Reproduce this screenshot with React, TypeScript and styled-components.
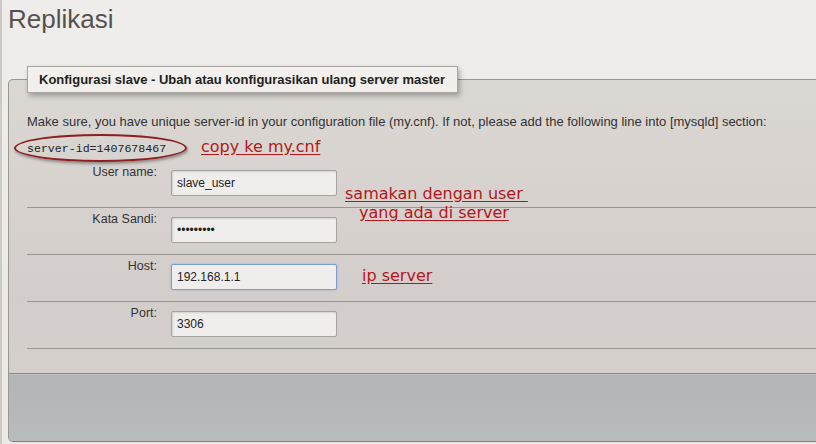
import React from "react";
import styled, { createGlobalStyle } from "styled-components";

const Global = createGlobalStyle`
  html, body {
    margin: 0;
    padding: 0;
    overflow: hidden;
    background: #ece9e6;
  }
  body {
    font-family: "Liberation Sans", Arial, sans-serif;
    color: #333;
  }
`;

const Page = styled.div`
  height: 444px;
  box-sizing: border-box;
  border-left: 2px solid #cdc9c5;
  padding: 4px 0 0 6px;
  background: linear-gradient(#efedeb, #ebe8e5);
`;

const Title = styled.h1`
  margin: 0 0 32px 0;
  font-family: "Liberation Sans", Arial, sans-serif;
  font-weight: normal;
  font-size: 26px;
  line-height: 30px;
  color: #57514d;
`;

const Fieldset = styled.fieldset`
  margin: 0 -40px 0 0;
  padding: 0 0 0 18px;
  border: 1px solid #9a9691;
  border-bottom-color: #7f7c79;
  border-radius: 5px;
  background: linear-gradient(#dbd7d3, #d3cecb 60%, #d5d1cd);
  min-width: 0;
`;

const Legend = styled.legend`
  padding: 5px 12px 5px 11px;
  margin: 0;
  background: #f2efec;
  border: 1px solid #a9a5a1;
  box-shadow: 2px 3px 5px rgba(0, 0, 0, 0.28);
  font-weight: bold;
  font-size: 13px;
  line-height: 15px;
  color: #222;
`;

const Intro = styled.p`
  margin: 21px 0 6px 0;
  font-size: 13px;
  line-height: 15px;
  color: #333;
`;

const ServerIdLine = styled.div`
  display: flex;
  align-items: center;
  height: 26px;
`;

const Code = styled.code`
  position: relative;
  font-family: "Liberation Mono", "Courier New", monospace;
  font-size: 11.6px;
  line-height: 14px;
  color: #222;
  width: 174px;
  margin-top: 2px;

  &::before {
    content: "";
    position: absolute;
    left: -13px;
    top: -8px;
    width: 169px;
    height: 24px;
    border: 2px solid #8d1f1f;
    border-radius: 50%;
    box-shadow: 1px 2px 3px rgba(0, 0, 0, 0.35);
  }
`;

const Note = styled.span`
  font-family: "DejaVu Sans", Verdana, sans-serif;
  font-size: 16px;
  line-height: 17px;
  color: #b3171b;
  text-decoration: underline;
  text-underline-offset: 2px;
  white-space: pre;
`;

const InlineNote = styled(Note)`
  margin-top: -4px;
`;

const Indent = styled.span`
  padding-left: 14px;
`;

const Form = styled.div`
  position: relative;
`;

const Row = styled.div`
  display: grid;
  grid-template-columns: 130px 166px;
  column-gap: 14px;
  align-items: start;
  padding: 9px 0 11px 0;
  border-bottom: 1px solid #9a9693;
`;

const Label = styled.label`
  text-align: right;
  margin-top: -5px;
  font-size: 12.5px;
  line-height: 14px;
  color: #333;
`;

const Input = styled.input<{ $focused?: boolean }>`
  box-sizing: border-box;
  width: 166px;
  height: 26px;
  margin: 0;
  padding: 0 5px;
  border: 1px solid ${(p) => (p.$focused ? "#7d9bd4" : "#a5a29f")};
  border-radius: 2px;
  background: #f0eeec;
  box-shadow: ${(p) =>
    p.$focused
      ? "0 0 2px rgba(90, 130, 210, 0.5)"
      : "inset 1px 1px 2px rgba(0, 0, 0, 0.12)"};
  font-family: "Liberation Sans", Arial, sans-serif;
  font-size: 12px;
  color: #222;
  outline: none;
`;

const Overlay = styled(Note)<{ $x: number; $y: number }>`
  position: absolute;
  left: ${(p) => p.$x}px;
  top: ${(p) => p.$y}px;
`;

const TwoLineOverlay = styled(Overlay)`
  line-height: 19px;
`;

const Footer = styled.div`
  margin: 24px 0 0 -18px;
  height: 67px;
  border-top: 1px solid #85888a;
  background: linear-gradient(#b2b5b7, #b9bcbd);
  box-shadow: inset 0 1px 0 #c4c7c8;
  border-bottom-left-radius: 4px;
`;

const rows = [
  { label: "User name:", value: "slave_user", type: "text" },
  { label: "Kata Sandi:", value: "123456789", type: "password" },
  { label: "Host:", value: "192.168.1.1", type: "text", focused: true },
  { label: "Port:", value: "3306", type: "text" },
];

export default function App() {
  return (
    <>
      <Global />
      <Page>
        <Title>Replikasi</Title>
        <Fieldset>
          <Legend>Konfigurasi slave - Ubah atau konfigurasikan ulang server master</Legend>
          <Intro>
            Make sure, you have unique server-id in your configuration file (my.cnf). If not, please add the following line into [mysqld] section:
          </Intro>
          <ServerIdLine>
            <Code>server-id=1407678467</Code>
            <InlineNote>copy ke my.cnf</InlineNote>
          </ServerIdLine>
          <Form>
            {rows.map((r) => (
              <Row key={r.label}>
                <Label>{r.label}</Label>
                <Input type={r.type} defaultValue={r.value} readOnly $focused={r.focused} />
              </Row>
            ))}
            <TwoLineOverlay $x={318} $y={23}>
              {"samakan dengan user "}
              <br />
              <Indent>yang ada di server</Indent>
            </TwoLineOverlay>
            <Overlay $x={335} $y={106}>{"ip server"}</Overlay>
          </Form>
          <Footer />
        </Fieldset>
      </Page>
    </>
  );
}
